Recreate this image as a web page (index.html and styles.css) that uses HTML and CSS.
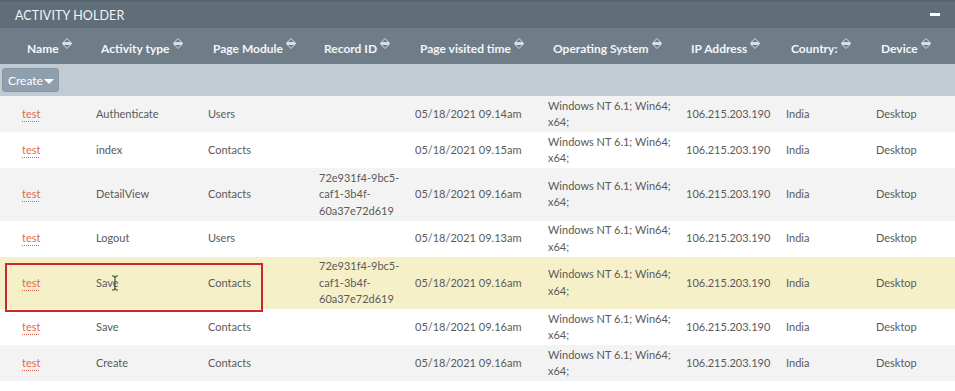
FILE: index.html
```html
<!DOCTYPE html>
<html>
<head>
<meta charset="utf-8">
<link rel="stylesheet" href="styles.css">
</head>
<body>
<div class="panel">
  <div class="titlebar">
    <span class="title">ACTIVITY HOLDER</span>
    <span class="minus"></span>
  </div>
  <div class="tablewrap">
    <table class="grid">
      <colgroup>
        <col class="c1"><col class="c2"><col class="c3"><col class="c4"><col class="c5"><col class="c6"><col class="c7"><col class="c8"><col class="c9">
      </colgroup>
      <thead>
        <tr class="head">
          <th>Name<svg class="sort" viewBox="0 0 12 13"><path d="M2 5.5 L6 1.5 L10 5.5 Z M1 6.5 H11 M2 7.5 L6 11.5 L10 7.5 Z"/></svg></th>
          <th>Activity type<svg class="sort" viewBox="0 0 12 13"><path d="M2 5.5 L6 1.5 L10 5.5 Z M1 6.5 H11 M2 7.5 L6 11.5 L10 7.5 Z"/></svg></th>
          <th>Page Module<svg class="sort" viewBox="0 0 12 13"><path d="M2 5.5 L6 1.5 L10 5.5 Z M1 6.5 H11 M2 7.5 L6 11.5 L10 7.5 Z"/></svg></th>
          <th>Record ID<svg class="sort" viewBox="0 0 12 13"><path d="M2 5.5 L6 1.5 L10 5.5 Z M1 6.5 H11 M2 7.5 L6 11.5 L10 7.5 Z"/></svg></th>
          <th>Page visited time<svg class="sort" viewBox="0 0 12 13"><path d="M2 5.5 L6 1.5 L10 5.5 Z M1 6.5 H11 M2 7.5 L6 11.5 L10 7.5 Z"/></svg></th>
          <th>Operating System<svg class="sort" viewBox="0 0 12 13"><path d="M2 5.5 L6 1.5 L10 5.5 Z M1 6.5 H11 M2 7.5 L6 11.5 L10 7.5 Z"/></svg></th>
          <th>IP Address<svg class="sort" viewBox="0 0 12 13"><path d="M2 5.5 L6 1.5 L10 5.5 Z M1 6.5 H11 M2 7.5 L6 11.5 L10 7.5 Z"/></svg></th>
          <th>Country:<svg class="sort" viewBox="0 0 12 13"><path d="M2 5.5 L6 1.5 L10 5.5 Z M1 6.5 H11 M2 7.5 L6 11.5 L10 7.5 Z"/></svg></th>
          <th>Device<svg class="sort" viewBox="0 0 12 13"><path d="M2 5.5 L6 1.5 L10 5.5 Z M1 6.5 H11 M2 7.5 L6 11.5 L10 7.5 Z"/></svg></th>
        </tr>
        <tr class="actions">
          <td colspan="9"><button class="create">Create<svg class="caret" viewBox="0 0 10 6"><path d="M0 0 H10 L5 5 Z"/></svg></button></td>
        </tr>
      </thead>
      <tbody>
        <tr class="odd">
          <td><a class="link">test</a></td><td>Authenticate</td><td>Users</td><td></td><td>05/18/2021 09.14am</td><td>Windows NT 6.1; Win64; x64;</td><td>106.215.203.190</td><td>India</td><td>Desktop</td>
        </tr>
        <tr class="even">
          <td><a class="link">test</a></td><td>index</td><td>Contacts</td><td></td><td>05/18/2021 09.15am</td><td>Windows NT 6.1; Win64; x64;</td><td>106.215.203.190</td><td>India</td><td>Desktop</td>
        </tr>
        <tr class="odd">
          <td><a class="link">test</a></td><td>DetailView</td><td>Contacts</td><td>72e931f4-9bc5-caf1-3b4f-60a37e72d619</td><td>05/18/2021 09.16am</td><td>Windows NT 6.1; Win64; x64;</td><td>106.215.203.190</td><td>India</td><td>Desktop</td>
        </tr>
        <tr class="even">
          <td><a class="link">test</a></td><td>Logout</td><td>Users</td><td></td><td>05/18/2021 09.13am</td><td>Windows NT 6.1; Win64; x64;</td><td>106.215.203.190</td><td>India</td><td>Desktop</td>
        </tr>
        <tr class="hover">
          <td><a class="link">test</a></td><td>Save</td><td>Contacts</td><td>72e931f4-9bc5-caf1-3b4f-60a37e72d619</td><td>05/18/2021 09.16am</td><td>Windows NT 6.1; Win64; x64;</td><td>106.215.203.190</td><td>India</td><td>Desktop</td>
        </tr>
        <tr class="even">
          <td><a class="link">test</a></td><td>Save</td><td>Contacts</td><td></td><td>05/18/2021 09.16am</td><td>Windows NT 6.1; Win64; x64;</td><td>106.215.203.190</td><td>India</td><td>Desktop</td>
        </tr>
        <tr class="odd">
          <td><a class="link">test</a></td><td>Create</td><td>Contacts</td><td></td><td>05/18/2021 09.16am</td><td>Windows NT 6.1; Win64; x64;</td><td>106.215.203.190</td><td>India</td><td>Desktop</td>
        </tr>
        <tr class="even">
          <td></td><td></td><td></td><td></td><td></td><td></td><td></td><td></td><td></td>
        </tr>
      </tbody>
    </table>
    <div class="redbox"></div>
    <svg class="ibeam" viewBox="0 0 8 16"><path d="M1 1 H3 Q4 1 4 3 V13 Q4 15 3 15 H1 M7 1 H5 Q4 1 4 3 M4 13 Q4 15 5 15 H7"/></svg>
  </div>
</div>
</body>
</html>
```
FILE: styles.css
```css
html, body {
  margin: 0;
  padding: 0;
  background: #ffffff;
  font-family: Lato, "Open Sans", Arial, sans-serif;
}

.panel {
  width: 955px;
  height: 391px;
  overflow: hidden;
}

.titlebar {
  height: 28px;
  box-sizing: border-box;
  border-top: 2px solid #56646e;
  background: #5f6e79;
  display: flex;
  align-items: center;
  justify-content: space-between;
  padding: 0 15px 0 15px;
}

.title {
  color: #f2f5f7;
  font-size: 12.5px;
  letter-spacing: 0.1px;
}

.minus {
  width: 10px;
  height: 3px;
  background: #ffffff;
  margin-right: 0;
  margin-top: -2px;
}

.tablewrap {
  position: relative;
}

.grid {
  width: 955px;
  table-layout: fixed;
  border-collapse: collapse;
  border-spacing: 0;
}

.c1 { width: 90px; }
.c2 { width: 112px; }
.c3 { width: 111px; }
.c4 { width: 96px; }
.c5 { width: 133px; }
.c6 { width: 138px; }
.c7 { width: 100px; }
.c8 { width: 90px; }
.c9 { width: 85px; }

.head th {
  background: #6e7d88;
  height: 36px;
  padding: 0 0 0 11px;
  text-align: left;
  color: #f3f6f8;
  font-size: 12px;
  font-weight: bold;
  white-space: nowrap;
  vertical-align: middle;
}

.head th:first-child {
  padding-left: 27px;
}

.sort {
  width: 12px;
  height: 13px;
  margin-left: 2px;
  vertical-align: 3px;
  fill: none;
  stroke: #d7dee3;
  stroke-width: 1;
}

.actions td {
  background: #c0cbd3;
  height: 32px;
  padding: 0 0 0 2px;
  vertical-align: middle;
}

.create {
  display: inline-flex;
  align-items: center;
  height: 24px;
  padding: 0 4px 0 5px;
  border: 1px solid #8797a4;
  border-radius: 3px;
  background: #8e9fad;
  color: #ffffff;
  font-family: Lato, "Open Sans", Arial, sans-serif;
  font-size: 12px;
  cursor: pointer;
}

.caret {
  width: 10px;
  height: 6px;
  margin-left: 1px;
  margin-top: 3px;
  fill: #ffffff;
}

tbody td {
  padding: 1.5px 1px 1.5px 6px;
  font-size: 11px;
  line-height: 16.5px;
  color: #5a5a5a;
  vertical-align: middle;
  height: 33px;
  box-sizing: content-box;
}

tbody td:first-child {
  padding-left: 22px;
}

tbody tr.odd td { background: #f3f3f3; }
tbody tr.even td { background: #ffffff; }
tbody tr.hover td { background: #f6f0c9; }

.link {
  color: #df6a4e;
  text-decoration: underline dotted #df6a4e;
  text-underline-offset: 3px;
}

.redbox {
  position: absolute;
  left: 5px;
  top: 235px;
  width: 254px;
  height: 45px;
  border: 2px solid #c9282c;
}

.ibeam {
  position: absolute;
  left: 111px;
  top: 247px;
  width: 8px;
  height: 16px;
  fill: none;
  stroke: #333333;
  stroke-width: 1;
}
```
